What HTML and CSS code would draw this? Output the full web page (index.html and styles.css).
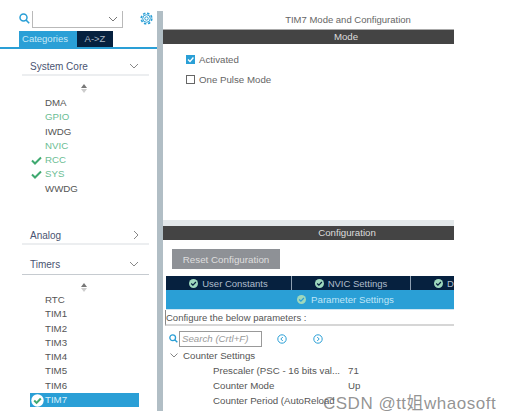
FILE: index.html
```html
<!DOCTYPE html>
<html>

	<head>
		<meta charset="UTF-8">
		<title>TIM7 Mode and Configuration</title>
		<link rel="stylesheet" href="styles.css">
	</head>

	<body>
		<div class="app">
			<div class="side">
				<div class="search_row">
					<svg class="icon_search" width="11" height="11" viewBox="0 0 11 11"><circle cx="4.5" cy="4.5" r="3.5" fill="none" stroke="#2a9fd6" stroke-width="1.5"/><path d="M7 7l3.2 3.2" stroke="#2a9fd6" stroke-width="1.6"/></svg>
					<div class="combo">
						<svg width="10" height="6" viewBox="0 0 10 6"><path d="M1 1l4 4 4-4" fill="none" stroke="#777" stroke-width="1"/></svg>
					</div>
					<svg class="icon_gear" width="13" height="13" viewBox="0 0 13 13"><circle cx="6.5" cy="6.5" r="5.3" fill="none" stroke="#2a9fd6" stroke-width="1.6" stroke-dasharray="2.4 1.76"/><circle cx="6.5" cy="6.5" r="3.8" fill="none" stroke="#2a9fd6" stroke-width="1"/><circle cx="6.5" cy="6.5" r="1.7" fill="none" stroke="#2a9fd6" stroke-width="1"/></svg>
				</div>
				<div class="tabs">
					<span class="tab tab_on">Categories</span>
					<span class="tab tab_off">A-&gt;Z</span>
				</div>

				<div class="group group_core">
					<span>System Core</span>
					<svg width="10" height="6" viewBox="0 0 10 6"><path d="M1 1l4 4 4-4" fill="none" stroke="#888" stroke-width="1"/></svg>
				</div>
				<div class="sorter"><i class="up"></i><i class="down"></i></div>
				<ul class="list list_core">
					<li>DMA</li>
					<li class="green">GPIO</li>
					<li>IWDG</li>
					<li class="green">NVIC</li>
					<li class="green"><svg class="tick" width="11" height="9" viewBox="0 0 11 9"><path d="M1 4.5l3 3 6-6" fill="none" stroke="#3fa970" stroke-width="2"/></svg>RCC</li>
					<li class="green"><svg class="tick" width="11" height="9" viewBox="0 0 11 9"><path d="M1 4.5l3 3 6-6" fill="none" stroke="#3fa970" stroke-width="2"/></svg>SYS</li>
					<li>WWDG</li>
				</ul>

				<div class="group group_analog">
					<span>Analog</span>
					<svg width="6" height="10" viewBox="0 0 6 10"><path d="M1 1l4 4-4 4" fill="none" stroke="#888" stroke-width="1"/></svg>
				</div>
				<div class="group group_timers">
					<span>Timers</span>
					<svg width="10" height="6" viewBox="0 0 10 6"><path d="M1 1l4 4 4-4" fill="none" stroke="#888" stroke-width="1"/></svg>
				</div>
				<div class="sorter"><i class="up"></i><i class="down"></i></div>
				<ul class="list list_timers">
					<li>RTC</li>
					<li>TIM1</li>
					<li>TIM2</li>
					<li>TIM3</li>
					<li>TIM4</li>
					<li>TIM5</li>
					<li>TIM6</li>
					<li class="selected"><svg class="badge" width="13" height="13" viewBox="0 0 13 13"><circle cx="6.5" cy="6.5" r="6.2" fill="#fff"/><path d="M3.2 6.5l2.4 2.4 4.2-4.4" fill="none" stroke="#3fa970" stroke-width="2"/></svg>TIM7</li>
					<li>TIM8</li>
				</ul>
			</div>

			<div class="main">
				<div class="title">TIM7 Mode and Configuration</div>
				<div class="bar bar_mode">Mode</div>
				<div class="mode_body">
					<label class="check"><span class="box box_on"><svg width="9" height="9" viewBox="0 0 9 9"><path d="M2 4.5l2 2 3.4-4" fill="none" stroke="#fff" stroke-width="1.3"/></svg></span>Activated</label>
					<label class="check"><span class="box"></span>One Pulse Mode</label>
				</div>
				<div class="bar">Configuration</div>
				<div class="reset_wrap"><button class="reset">Reset Configuration</button></div>
				<div class="conf_tabs">
					<div class="conf_tab conf_tab1"><span class="dot"><svg width="9" height="9" viewBox="0 0 9 9"><path d="M2.2 4.5l1.7 1.7 3-3.2" fill="none" stroke="#06213f" stroke-width="1.2"/></svg></span>User Constants</div>
					<div class="conf_tab conf_tab2"><span class="dot"><svg width="9" height="9" viewBox="0 0 9 9"><path d="M2.2 4.5l1.7 1.7 3-3.2" fill="none" stroke="#06213f" stroke-width="1.2"/></svg></span>NVIC Settings</div>
					<div class="conf_tab conf_tab3"><span class="dot"><svg width="9" height="9" viewBox="0 0 9 9"><path d="M2.2 4.5l1.7 1.7 3-3.2" fill="none" stroke="#06213f" stroke-width="1.2"/></svg></span>D</div>
				</div>
				<div class="param_tab"><span class="dot"><svg width="9" height="9" viewBox="0 0 9 9"><path d="M2.2 4.5l1.7 1.7 3-3.2" fill="none" stroke="#2a9fd6" stroke-width="1.2"/></svg></span>Parameter Settings</div>
				<div class="configure">Configure the below parameters :</div>
				<div class="search_line">
					<svg width="9" height="9" viewBox="0 0 11 11"><circle cx="4.5" cy="4.5" r="3.5" fill="none" stroke="#2a9fd6" stroke-width="1.6"/><path d="M7 7l3.2 3.2" stroke="#2a9fd6" stroke-width="1.7"/></svg>
					<div class="search_box">Search (Crtl+F)</div>
					<svg class="nav nav_prev" width="10" height="10" viewBox="0 0 10 10"><circle cx="5" cy="5" r="4.2" fill="none" stroke="#2a9fd6"/><path d="M5.8 3L3.8 5l2 2" fill="none" stroke="#2a9fd6"/></svg>
					<svg class="nav nav_next" width="10" height="10" viewBox="0 0 10 10"><circle cx="5" cy="5" r="4.2" fill="none" stroke="#2a9fd6"/><path d="M4.2 3l2 2-2 2" fill="none" stroke="#2a9fd6"/></svg>
				</div>
				<div class="tree_head">
					<svg width="8" height="5" viewBox="0 0 8 5"><path d="M.5.5L4 4 7.5.5" fill="none" stroke="#777" stroke-width=".9"/></svg>
					Counter Settings
				</div>
				<div class="param"><span class="p_name">Prescaler (PSC - 16 bits val...</span><span>71</span></div>
				<div class="param"><span class="p_name">Counter Mode</span><span>Up</span></div>
				<div class="param"><span class="p_name">Counter Period (AutoReload</span><span></span></div>
			</div>
		</div>
		<div class="watermark">CSDN @tt姐whaosoft</div>
	</body>

</html>
```
FILE: styles.css
```css
* {
	margin: 0;
	padding: 0;
	box-sizing: border-box;
}

body {
	background: #fff;
	font-family: "Liberation Sans", "Noto Sans CJK SC", sans-serif;
	font-size: 9.7px;
	color: #555;
}

.app {
	display: flex;
	width: 454px;
	height: 400px;
	margin-top: 11px;
	overflow: hidden;
}

.side {
	width: 157px;
	flex-shrink: 0;
	overflow: hidden;
}

.search_row {
	display: flex;
	align-items: flex-start;
	height: 20px;
	padding-left: 19px;
}

.icon_search {
	margin: 2px 2px 0 0;
}

.combo {
	display: flex;
	justify-content: flex-end;
	align-items: center;
	width: 91px;
	height: 17px;
	padding-right: 4px;
	border: 1px solid #b9b9b9;
	border-top: none;
}

.icon_gear {
	margin: 1px 0 0 17px;
}

.tabs {
	display: flex;
	height: 18px;
	padding-left: 19px;
	border-bottom: 2px solid #2a9fd6;
}

.tab {
	height: 16px;
	line-height: 16px;
	text-align: center;
	font-size: 9.5px;
}

.tab_on {
	width: 58px;
	padding-right: 6px;
	background: #2a9fd6;
	color: #c9e9f7;
}

.tab_off {
	width: 36px;
	background: #06213f;
	color: #a9b6c4;
}

.group {
	display: flex;
	justify-content: space-between;
	align-items: center;
	margin: 0 8px 0 22px;
	padding: 0 10px 0 8px;
	border-bottom: 2px solid #eceef0;
	font-size: 10px;
	color: #4a5472;
}

.group_core {
	height: 27px;
	padding-top: 9px;
}

.group_analog {
	height: 21px;
	padding-top: 3px;
}

.group_timers {
	height: 28px;
	margin-top: 2px;
	padding-top: 7px;
	border-bottom: 1px solid #c6cbd0;
}

.sorter {
	display: flex;
	flex-direction: column;
	align-items: center;
	gap: 1px;
	width: 168px;
	height: 20px;
	padding-top: 8px;
}

.up,
.down {
	width: 0;
	height: 0;
	border-left: 3px solid transparent;
	border-right: 3px solid transparent;
}

.up {
	border-bottom: 4px solid #777;
}

.down {
	border-top: 4px solid #ccc;
}

.list {
	list-style: none;
	padding-left: 30px;
}

.list_core {
	height: 128px;
	margin-top: 0;
}

.list_timers {
	margin-top: -2px;
}

.list li {
	position: relative;
	height: 14.3px;
	padding-left: 15px;
	line-height: 14.3px;
	font-size: 9.7px;
	color: #555;
}

.list .green {
	color: #6bbd93;
}

.tick {
	position: absolute;
	left: 1px;
	top: 3px;
}

.list .selected {
	width: 109px;
	background: #2a9fd6;
	color: #d9f0fa;
}

.badge {
	position: absolute;
	left: 1px;
	top: 1px;
}

.main {
	flex: 1;
	min-width: 0;
	border-left: 6px solid #b1bec5;
	overflow: hidden;
}

.title {
	height: 18px;
	padding: 3px 0 0 79px;
	text-align: center;
	font-size: 9.5px;
	color: #666;
}

.bar {
	height: 14px;
	line-height: 14px;
	padding-left: 77px;
	background: #444;
	text-align: center;
	color: #ddd;
}

.bar_mode {
	height: 15px;
	padding-left: 75px;
	border-top: 1px solid #aaa;
}

.mode_body {
	height: 182px;
	padding: 5px 0 0 23px;
	border-bottom: 6px solid #e3e8ea;
}

.check {
	display: flex;
	align-items: center;
	height: 20px;
	gap: 4px;
	color: #666;
}

.box {
	display: flex;
	width: 9px;
	height: 9px;
	border: 1px solid #666;
}

.box_on {
	border: none;
	background: #2a9fd6;
}

.reset_wrap {
	height: 36px;
	padding: 9px 0 0 9px;
}

.reset {
	width: 108px;
	height: 20px;
	border: none;
	background: #8e9196;
	color: #dedede;
	font-family: "Liberation Sans", sans-serif;
	font-size: 9.8px;
}

.conf_tabs {
	display: flex;
	height: 14px;
	margin-left: 3px;
	background: #06213f;
	color: #b0becc;
	font-size: 9.5px;
}

.conf_tab {
	display: flex;
	justify-content: center;
	align-items: center;
	gap: 4px;
	height: 14px;
	border-right: 1px solid #8ea0b2;
}

.conf_tab1 {
	width: 126px;
}

.conf_tab2 {
	width: 119px;
}

.conf_tab3 {
	flex: 1;
	justify-content: flex-start;
	padding-left: 23px;
	border-right: none;
}

.dot {
	display: flex;
	flex-shrink: 0;
	width: 9px;
	height: 9px;
	border-radius: 50%;
	background: #9ed8bd;
}

.param_tab {
	display: flex;
	justify-content: center;
	align-items: center;
	gap: 5px;
	height: 20px;
	margin-left: 3px;
	padding-left: 71px;
	border-bottom: 1px solid #cfe6f2;
	background: #2a9fd6;
	color: #bfe5f6;
}

.configure {
	height: 16px;
	margin-left: 2px;
	padding-top: 2px;
	border-left: 1px solid #888;
	border-bottom: 2px solid #d6d6d6;
	font-size: 9.5px;
	line-height: 11px;
	color: #555;
}

.search_line {
	display: flex;
	align-items: center;
	height: 19px;
	margin-top: 3px;
	padding-left: 6px;
}

.search_box {
	width: 83px;
	height: 16px;
	margin-left: 1px;
	padding-left: 2px;
	border: 1px solid #999;
	line-height: 14px;
	font-style: italic;
	color: #999;
}

.nav_prev {
	margin-left: 15px;
}

.nav_next {
	margin-left: 26px;
}

.tree_head {
	display: flex;
	align-items: center;
	gap: 5px;
	height: 15px;
	padding-left: 7px;
}

.param {
	display: flex;
	height: 15px;
	line-height: 15px;
	padding-left: 50px;
}

.p_name {
	width: 135px;
	white-space: nowrap;
	overflow: hidden;
}

.watermark {
	position: absolute;
	left: 323px;
	top: 389px;
	color: rgba(100, 100, 100, .7);
	font-size: 17px;
	letter-spacing: .5px;
	white-space: nowrap;
}
```
